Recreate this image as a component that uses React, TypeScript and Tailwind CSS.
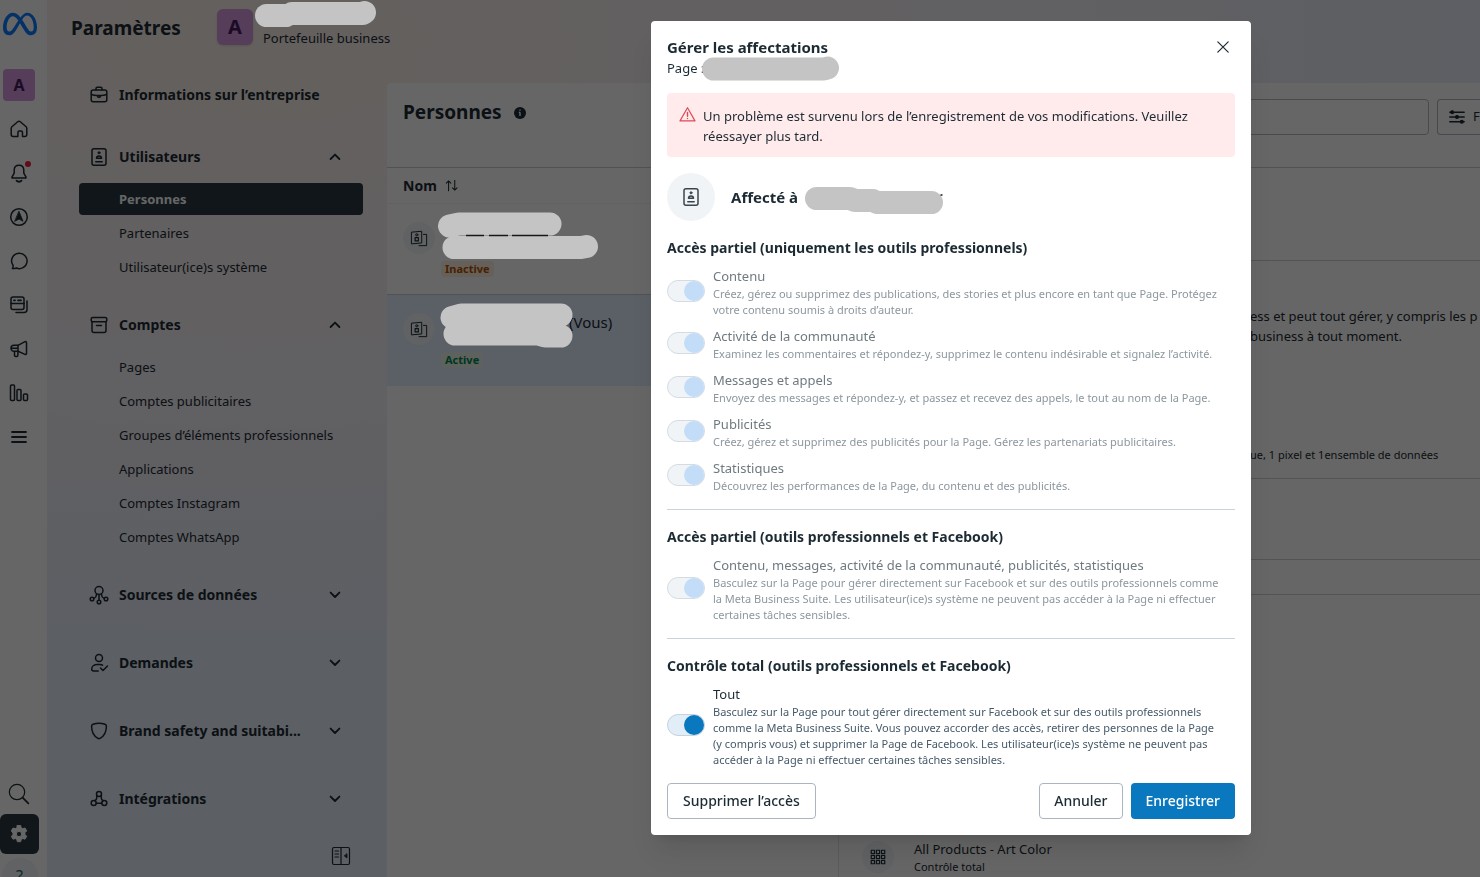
import { useId, type ReactNode } from "react";
import { FaMeta } from "react-icons/fa6";

function Icon({ children, size = 20, className = "" }: { children: ReactNode; size?: number; className?: string }) {
  return (
    <svg
      width={size}
      height={size}
      viewBox="0 0 20 20"
      fill="none"
      stroke="currentColor"
      strokeWidth="1.5"
      strokeLinecap="round"
      strokeLinejoin="round"
      className={"shrink-0 " + className}
      aria-hidden="true"
    >
      {children}
    </svg>
  );
}

const HomeIcon = () => (
  <Icon>
    <path d="M2.2 9.2a2 2 0 0 1 .7-1.5l5.8-4.9a2 2 0 0 1 2.6 0l5.8 4.9a2 2 0 0 1 .7 1.5v6.3a2 2 0 0 1-2 2h-2.3v-4a1.5 1.5 0 0 0-1.5-1.5h-1.6a1.5 1.5 0 0 0-1.500 1.500v4H4.200a2 2 0 0 1-2-2z" />
  </Icon>
);
const BellIcon = () => (
  <Icon>
    <path d="M10 2.2c-3 0-4.8 2.2-4.8 5v3L3 14.2c-.2.5 0 .8.5.8h13c.5 0 .7-.3.5-.8l-2.2-4v-3c0-2.8-1.8-5-4.8-5z" />
    <path d="M7.5 17.6c1.2 1.5 3.8 1.5 5 0" strokeWidth="1.8" />
  </Icon>
);
const CompassIcon = () => (
  <Icon>
    <circle cx="10" cy="10" r="8.3" />
    <path d="M10 4.500l4 9.700-4-2.200-4 2.200z" fill="currentColor" strokeWidth="0.8" />
  </Icon>
);
const ChatIcon = () => (
  <Icon>
    <path d="M10.200 2.200a7.700 7.700 0 1 1-2.800 14.800c-1.300.5-2.700.8-4 .5.700-1 .9-2 .6-3.200A7.700 7.700 0 0 1 10.200 2.200z" />
  </Icon>
);
const PostsIcon = () => (
  <Icon>
    <rect x="2" y="2" width="13" height="12.5" rx="2" />
    <path d="M2 8.500h13M18 6v8.500a3 3 0 0 1-3 3H7" />
    <path d="M5 5.300h1M9 5.300h3" strokeWidth="1.8" />
  </Icon>
);
const MegaphoneIcon = () => (
  <Icon>
    <path d="M9 6.300l7-3.600c.7-.3 1.500.1 1.500.9v11c0 .8-.8 1.200-1.500.8L9 12.300" />
    <path d="M9 6.300H5a3 3 0 0 0 0 6h4zM5.500 12.500v3.800c0 .7.500 1.200 1.200 1.200h1c.7 0 1.200-.5 1.200-1.200v-4M2.200 9.300H9" />
  </Icon>
);
const BarsIcon = () => (
  <Icon>
    <rect x="1.5" y="2" width="4" height="15.5" rx="1" />
    <rect x="8" y="6.5" width="4" height="11" rx="1" />
    <rect x="14.5" y="11" width="4" height="6.5" rx="1" />
  </Icon>
);
const MenuIcon = () => (
  <Icon>
    <path d="M3 5h14M3 10h14M3 15h14" strokeWidth="1.8" />
  </Icon>
);
const SearchIcon = () => (
  <Icon size={22}>
    <circle cx="8.2" cy="8.2" r="7" strokeWidth="1.1" />
    <path d="M13.300 13.300l5.200 5.200" strokeWidth="1.6" />
  </Icon>
);
const GearIcon = () => (
  <Icon className="text-white">
    <path
      fill="currentColor"
      strokeWidth="1"
      fillRule="evenodd"
      d="M8.300 1.500h3.400l.5 2.300 1.600.9 2.200-.7 1.700 2.900-1.700 1.700v2l1.700 1.700-1.700 2.900-2.200-.7-1.600.9-.5 2.300H8.300l-.5-2.300-1.600-.9-2.200.7-1.700-2.900L4 11v-2L2.300 6.900 4 4l2.200.7 1.600-.9zM10 7.300a2.700 2.700 0 1 0 0 5.400 2.700 2.700 0 0 0 0-5.400z"
    />
  </Icon>
);
const BriefcaseIcon = () => (
  <Icon>
    <rect x="2.200" y="5" width="15.600" height="11.800" rx="2" />
    <path d="M7 5V3.500c0-.8.500-1.300 1.300-1.300h3.400c.8 0 1.300.5 1.300 1.300V5M2.500 9.500c2 .8 3.700 1 5.500 1h4c1.800 0 3.500-.2 5.500-1M8.500 10.500v.8c0 .6.500 1 1 1h1c.5 0 1-.4 1-1v-.8" />
  </Icon>
);
const BadgeIcon = () => (
  <Icon>
    <rect x="3" y="1.700" width="14" height="16.600" rx="2" />
    <circle cx="10" cy="5.800" r="1.100" fill="currentColor" strokeWidth="0.8" />
    <path d="M7.500 11.300c0-3 5-3 5 0zM6.800 14.700h6.400" />
  </Icon>
);
const ArchiveIcon = () => (
  <Icon>
    <rect x="2.200" y="2.400" width="15.600" height="4.400" rx="1.500" />
    <path d="M3 6.800v8.700a2 2 0 0 0 2 2h10a2 2 0 0 0 2-2V6.800M7.500 10.500h5" />
  </Icon>
);
const SourcesIcon = () => (
  <Icon>
    <circle cx="10" cy="5.500" r="4" />
    <circle cx="3" cy="14" r="1.800" />
    <circle cx="10" cy="17" r="1.800" />
    <circle cx="17" cy="14" r="1.800" />
    <path d="M10 9.500v5.700M7.500 9l-.3 2c-.2 1.200-1 1.700-2.400 2.400M12.500 9l.3 2c.2 1.200 1 1.700 2.400 2.400" />
  </Icon>
);
const RequestsIcon = () => (
  <Icon>
    <circle cx="10" cy="5" r="3.500" />
    <path d="M13.500 12.200c-.7-.5-1.500-.7-2.500-.7H8.500c-3.500 0-5.800 2-5.800 4.500 0 1.200.8 2 2 2h4.500M11.500 15l2.500 2.500 4.500-4.500" />
  </Icon>
);
const ShieldIcon = () => (
  <Icon>
    <path d="M10 2.300c2.200 0 4.200.4 6 1 .9.300 1.400 1 1.400 1.900 0 5.800-2 9.700-6.300 12.100a2.200 2.200 0 0 1-2.200 0C4.600 14.900 2.600 11 2.600 5.200c0-.9.500-1.600 1.400-1.900 1.800-.6 3.800-1 6-1z" />
  </Icon>
);
const IntegrationsIcon = () => (
  <Icon>
    <circle cx="10" cy="5" r="2.500" />
    <circle cx="4.700" cy="14" r="2.500" />
    <circle cx="15.300" cy="14" r="2.500" />
    <path d="M7.700 6.500v2.500c0 1-.6 1.800-1.700 2.700M12.300 6.500v2.500c0 1 .6 1.800 1.700 2.700M7.200 14.300h5.600" />
  </Icon>
);
const Chevron = ({ up }: { up?: boolean }) => (
  <Icon size={16} className="ml-auto">
    <path d={up ? "M4.500 12.500L10 7l5.500 5.500" : "M4.500 7L10 12.500 15.500 7"} strokeWidth="2.300" />
  </Icon>
);
const CollapseIcon = () => (
  <Icon>
    <rect x="1.500" y="1.500" width="17" height="17" rx="1.500" strokeWidth="1.200" />
    <path d="M10 1.500v17M4 5h3.500M4 8h3.500M4 11h3.500" strokeWidth="1.200" />
    <path d="M16 8v4l-2.500-2z" fill="currentColor" strokeWidth="0.800" />
  </Icon>
);
const CardsIcon = () => (
  <Icon size={18}>
    <path d="M2 3.500l11-1v13l-11 1zM15 6h3.500v12.500H10" strokeWidth="1.100" />
    <circle cx="7.500" cy="6.500" r="1.200" strokeWidth="1.100" />
    <path d="M5.700 9.500h3.600v3.700H5.700z" strokeWidth="1.300" />
  </Icon>
);

/** Grey marker strokes that hide a private name. Each stroke is an SVG path. */
function Redaction({
  strokes,
  width,
  height,
  thickness = 23,
  marks,
  className,
}: {
  strokes: string[];
  width: number;
  height: number;
  thickness?: number;
  marks?: string;
  className: string;
}) {
  return (
    <svg width={width} height={height} className={"absolute z-20 overflow-visible " + className} fill="none" aria-hidden="true">
      {strokes.map((d) => (
        <path key={d} d={d} stroke="#c4c4c4" strokeWidth={thickness} strokeLinecap="round" strokeLinejoin="round" />
      ))}
      {marks && <path d={marks} stroke="#15191b" strokeWidth="1.500" />}
    </svg>
  );
}

const railItems: { label: string; icon: ReactNode; dot?: boolean }[] = [
  { label: "Accueil", icon: <HomeIcon /> },
  { label: "Notifications", icon: <BellIcon />, dot: true },
  { label: "Explorer", icon: <CompassIcon /> },
  { label: "Messages", icon: <ChatIcon /> },
  { label: "Contenu", icon: <PostsIcon /> },
  { label: "Publicités", icon: <MegaphoneIcon /> },
  { label: "Statistiques", icon: <BarsIcon /> },
  { label: "Menu", icon: <MenuIcon /> },
];

function Rail() {
  return (
    <nav className="flex w-[47px] shrink-0 flex-col bg-white" aria-label="Meta">
      <a href="#" aria-label="Meta" className="flex h-[63px] items-start pt-[7px] pl-[3px]">
        <FaMeta size={34} className="text-[#0a7cff]" />
      </a>
      <div className="flex w-[38px] flex-col items-center">
        <button className="my-[6px] size-8 rounded bg-[#d898de] text-base font-bold text-[#481c60]">A</button>
        {railItems.map((item) => (
          <button key={item.label} aria-label={item.label} className="relative grid h-11 place-items-center">
            {item.icon}
            {item.dot && <span className="absolute top-[10px] -right-[2px] size-[6px] rounded-full bg-[#f5203c]" />}
          </button>
        ))}
      </div>
      <div className="mt-auto flex w-[39px] flex-col">
        <button aria-label="Rechercher" className="grid h-10 place-items-center pr-px">
          <SearchIcon />
        </button>
        <button aria-label="Paramètres" className="grid h-10 place-items-center rounded-md bg-[#283943] pr-px">
          <GearIcon />
        </button>
        <div className="mt-1 flex h-[19px] justify-center overflow-hidden">
          <button className="size-9 shrink-0 rounded-full bg-[#f1f4f7] text-base leading-9 text-[#1c6a70]">?</button>
        </div>
      </div>
    </nav>
  );
}

const groups: { label: string; icon: ReactNode; items: string[] }[] = [
  { label: "Utilisateurs", icon: <BadgeIcon />, items: ["Personnes", "Partenaires", "Utilisateur(ice)s système"] },
  {
    label: "Comptes",
    icon: <ArchiveIcon />,
    items: [
      "Pages",
      "Comptes publicitaires",
      "Groupes d’éléments professionnels",
      "Applications",
      "Comptes Instagram",
      "Comptes WhatsApp",
    ],
  },
  { label: "Sources de données", icon: <SourcesIcon />, items: [] },
  { label: "Demandes", icon: <RequestsIcon />, items: [] },
  { label: "Brand safety and suitabi...", icon: <ShieldIcon />, items: [] },
  { label: "Intégrations", icon: <IntegrationsIcon />, items: [] },
];

function Sidebar() {
  return (
    <aside className="flex w-[340px] shrink-0 flex-col">
      <header className="flex h-[77px] shrink-0 items-start pt-2 pl-6 whitespace-nowrap">
        <h1 className="w-32 shrink-0 text-[19px] leading-10 font-bold">Paramètres</h1>
        <span className="mt-2 h-6 w-px bg-[#dcd3d0]" />
        <span className="mt-px ml-[18px] grid size-9 shrink-0 place-items-center rounded-md bg-[#d898de] text-xl font-bold text-[#481c60] shadow">
          A
        </span>
        <div className="relative pt-5 pl-[10px] text-[13px] leading-5">
          Portefeuille business
          <Redaction
            className="-top-2 left-[2px]"
            width={121}
            height={27}
            strokes={["M11.5 15.5L31 15.5", "M37 13.5H108L109.5 12.5"]}
          />
        </div>
      </header>
      <nav className="flex flex-col pr-6 pl-8" aria-label="Paramètres">
        <a href="#" className="mb-[26px] flex h-9 items-center gap-[10px] pl-[10px] text-sm font-bold">
          <BriefcaseIcon />
          Informations sur l’entreprise
        </a>
        {groups.map((group) => {
          const open = group.items.length > 0;
          return (
            <section key={group.label} className={open ? "mb-6" : "mb-8 last:mb-0"}>
              <button
                aria-expanded={open}
                className="flex h-9 w-full items-center gap-[10px] pr-5 pl-[10px] text-left text-sm font-bold"
              >
                {group.icon}
                {group.label}
                <Chevron up={open} />
              </button>
              {open && (
                <ul className="mt-2 flex flex-col gap-[2px]">
                  {group.items.map((item) => (
                    <li key={item}>
                      <a
                        href="#"
                        className={
                          "block rounded pl-10 text-[13px] leading-8 " +
                          (item === "Personnes" ? "bg-[#283943] font-bold text-white" : "")
                        }
                      >
                        {item}
                      </a>
                    </li>
                  ))}
                </ul>
              )}
            </section>
          );
        })}
      </nav>
      <button aria-label="Réduire" className="mt-auto mr-9 mb-[11px] self-end">
        <CollapseIcon />
      </button>
    </aside>
  );
}

function PeopleList() {
  return (
    <table className="w-full border-separate border-spacing-0 text-left">
      <thead>
        <tr>
          <th className="h-9 border-b border-[#f1f2f4] pl-4 text-sm font-bold">
            <span className="flex items-center gap-2">
              Nom
              <Icon size={13}>
                <path d="M5.500 18V3M2 6.500L5.500 3 9 6.500M15 2v15M11.500 13.500L15 17l3.500-3.500" strokeWidth="1.600" />
              </Icon>
            </span>
          </th>
        </tr>
      </thead>
      <tbody>
        <tr>
          <td className="h-[91px] border-b border-[#c8cdd2] p-0 pl-4 align-top">
            <div className="relative flex items-start gap-[6px]">
              <span className="mt-[18px] grid size-8 place-items-center rounded-full bg-[#f1f4f7]">
                <CardsIcon />
              </span>
              <span className="mt-[57px] rounded bg-[#fff0e0] px-1 text-[11px] leading-4 font-bold text-[#b85000]">
                Inactive
              </span>
              <Redaction
                className="top-2 left-[35px]"
                width={161}
                height={48}
                marks="M28 23.5H46M51 23.5H70M74 23.500H110"
                strokes={["M11.5 14L21 12H112", "M16 35.500H143L148.500 34.500"]}
              />
            </div>
          </td>
        </tr>
        <tr>
          <td className="h-[91px] bg-[#e4edff] p-0 pl-4 align-top">
            <div className="relative flex items-start gap-[6px]">
              <span className="mt-[18px] grid size-8 place-items-center rounded-full bg-[#f1f4f7]">
                <CardsIcon />
              </span>
              <span className="flex flex-col items-start">
                <span className="pt-[17px] pl-[128px] text-[15px] leading-5">(Vous)</span>
                <span className="mt-5 rounded bg-[#eaf6ee] px-1 text-[11px] leading-4 font-bold text-[#00884a]">
                  Active
                </span>
              </span>
              <Redaction
                className="top-2 left-[37px]"
                width={134}
                height={45}
                strokes={["M12 14.5L21 12H121", "M15 31H98L105 33H121", "M20 23H112"]}
              />
            </div>
          </td>
        </tr>
      </tbody>
    </table>
  );
}

const gridSteps = [2.5, 8.2, 13.9];

function Details() {
  return (
    <section className="flex min-w-0 flex-1 flex-col overflow-hidden border-l border-[#e4e6e8]">
      <div className="h-[93px] border-b border-[#d0d0d0]" />
      <div className="flex h-[218px] flex-col border-b border-[#d0d0d0] pl-[411px] whitespace-nowrap">
        <p className="mt-[45px] text-[13px] leading-5">
          ess et peut tout gérer, y compris les p<br />
          business à tout moment.
        </p>
        <p className="mt-auto mb-[15px] text-[11px] leading-4">ue, 1 pixel et 1ensemble de données</p>
      </div>
      <div className="h-[81px] border-b border-[#d0d0d0]" />
      <div className="h-[35px] border-b border-[#d0d0d0]" />
      <div className="mt-auto flex items-center pb-[2px] pl-[23px]">
        <span className="grid size-8 place-items-center rounded-full bg-[#f1f4f7]">
          <Icon size={18}>
            <g strokeWidth="1.300">
              {gridSteps.map((y) =>
                gridSteps.map((x) => <rect key={x + "-" + y} x={x} y={y} width="3.600" height="3.600" />),
              )}
            </g>
          </Icon>
        </span>
        <div className="ml-5">
          <p className="text-[13px] leading-5">All Products - Art Color</p>
          <p className="text-[11px] leading-4">Contrôle total</p>
        </div>
      </div>
    </section>
  );
}

function Toggle({ label, text, disabled }: { label: string; text: string; disabled?: boolean }) {
  const id = useId();
  return (
    <div className="flex items-center gap-2">
      <input
        id={id}
        type="checkbox"
        role="switch"
        defaultChecked
        disabled={disabled}
        className="mb-[2px] flex h-[22px] w-[38px] shrink-0 appearance-none items-center justify-end rounded-full border border-[#c5d3de] bg-[#e1edf7] before:size-5 before:rounded-full before:bg-[#0a78be] disabled:border-[#d3dce4] disabled:bg-[#f1f4f7] disabled:before:bg-[#c3dcf7]"
      />
      <div className="pr-3">
        <label htmlFor={id} className={"block text-[13px] leading-5 " + (disabled ? "text-[#6f7a80]" : "text-[#1c2b33]")}>
          {label}
        </label>
        <p className={"text-[11px] leading-4 " + (disabled ? "text-[#8c979e]" : "text-[#465a69]")}>{text}</p>
      </div>
    </div>
  );
}

function AccessSection({ title, divided, children }: { title: string; divided?: boolean; children: ReactNode }) {
  return (
    <section className={divided ? "border-t border-[#cbd2d9] pt-4 pb-[15px]" : "pb-[15px]"}>
      <h3 className="mb-[7px] text-sm leading-[22px] font-bold">{title}</h3>
      <div className="flex flex-col gap-2">{children}</div>
    </section>
  );
}

function AssignmentDialog() {
  return (
    <div
      role="dialog"
      aria-modal="true"
      aria-labelledby="dialog-title"
      className="relative z-20 w-[600px] max-w-full rounded bg-white p-4 text-[#1c2b33] shadow-xl"
    >
      <header className="flex items-start justify-between">
        <div>
          <h2 id="dialog-title" className="text-[15px] leading-[21px] font-bold">
            Gérer les affectations
          </h2>
          <p className="relative text-[13px] leading-5">
            Page :
            <Redaction
              className="-top-[2px] left-[35px]"
              width={137}
              height={25}
              strokes={["M11.5 13H122L125.5 12"]}
            />
          </p>
        </div>
        <button aria-label="Fermer" className="mt-[2px] mr-1">
          <Icon size={16}>
            <path d="M3.500 3.500l13 13M16.500 3.500l-13 13" strokeWidth="1.500" />
          </Icon>
        </button>
      </header>

      <div role="alert" className="mt-[15px] flex gap-[7px] rounded bg-[#ffebec] pt-[13px] pr-8 pb-[11px] pl-3 text-[13px] leading-5">
        <Icon size={17} className="text-[#dd4a57]">
          <path d="M10 2L18.800 17.500H1.200z" strokeWidth="1.400" />
          <path d="M10 7.500v4.500M10 14.600v.2" strokeWidth="1.700" />
        </Icon>
        <p>Un problème est survenu lors de l’enregistrement de vos modifications. Veuillez réessayer plus tard.</p>
      </div>

      <div className="mt-4 mb-4 flex items-center gap-4">
        <span className="grid size-12 place-items-center rounded-full bg-[#f1f4f7] text-[#3a464d]">
          <BadgeIcon />
        </span>
        <p className="relative text-[15px] leading-6 font-bold">
          Affecté à
          <Redaction
            className="top-[2px] left-[74px]"
            width={138}
            height={27}
            marks="M135.500 8h2"
            strokes={["M11.5 11.500H45L50 13.500H68L72 15.500H126.500"]}
          />
        </p>
      </div>

      <AccessSection title="Accès partiel (uniquement les outils professionnels)">
        <Toggle
          disabled
          label="Contenu"
          text="Créez, gérez ou supprimez des publications, des stories et plus encore en tant que Page. Protégez votre contenu soumis à droits d’auteur."
        />
        <Toggle
          disabled
          label="Activité de la communauté"
          text="Examinez les commentaires et répondez-y, supprimez le contenu indésirable et signalez l’activité."
        />
        <Toggle
          disabled
          label="Messages et appels"
          text="Envoyez des messages et répondez-y, et passez et recevez des appels, le tout au nom de la Page."
        />
        <Toggle
          disabled
          label="Publicités"
          text="Créez, gérez et supprimez des publicités pour la Page. Gérez les partenariats publicitaires."
        />
        <Toggle
          disabled
          label="Statistiques"
          text="Découvrez les performances de la Page, du contenu et des publicités."
        />
      </AccessSection>

      <AccessSection divided title="Accès partiel (outils professionnels et Facebook)">
        <Toggle
          disabled
          label="Contenu, messages, activité de la communauté, publicités, statistiques"
          text="Basculez sur la Page pour gérer directement sur Facebook et sur des outils professionnels comme la Meta Business Suite. Les utilisateur(ice)s système ne peuvent pas accéder à la Page ni effectuer certaines tâches sensibles."
        />
      </AccessSection>

      <AccessSection divided title="Contrôle total (outils professionnels et Facebook)">
        <Toggle
          label="Tout"
          text="Basculez sur la Page pour tout gérer directement sur Facebook et sur des outils professionnels comme la Meta Business Suite. Vous pouvez accorder des accès, retirer des personnes de la Page (y compris vous) et supprimer la Page de Facebook. Les utilisateur(ice)s système ne peuvent pas accéder à la Page ni effectuer certaines tâches sensibles."
        />
      </AccessSection>

      <footer className="flex gap-2 text-sm font-medium">
        <button className="mr-auto h-9 rounded border border-[#a9b6c2] px-[15px]">Supprimer l’accès</button>
        <button className="h-9 rounded border border-[#a9b6c2] px-[14px]">Annuler</button>
        <button className="h-9 rounded bg-[#0a78be] px-[15px] text-white">Enregistrer</button>
      </footer>
    </div>
  );
}

export default function App() {
  return (
    <div className="font-['Noto_Sans',sans-serif] text-[#1c2b33]">
      <div className="flex h-screen overflow-hidden">
        <Rail />
        <div className="flex min-w-0 flex-1 bg-[radial-gradient(ellipse_1350px_620px_at_15%_5%,#faf0ea_0%,#f2eff6_60%,#e6eefa_100%)]">
          <Sidebar />
          <main className="mt-[83px] flex min-w-0 flex-1 flex-col rounded-tl bg-white">
            <header className="flex h-[85px] shrink-0 items-start border-b border-[#c8cdd2] pt-4 pl-4">
              <h2 className="text-[19px] leading-[26px] font-bold">Personnes</h2>
              <svg width="12" height="12" viewBox="0 0 12 12" className="mt-2 ml-3" aria-hidden="true">
                <circle cx="6" cy="6" r="6" fill="currentColor" />
                <path d="M6 5.300v3.700M4.800 5.400H6M6 2.600v1.200" stroke="#fff" strokeWidth="1.400" />
              </svg>
              <input
                type="search"
                aria-label="Rechercher"
                className="mr-2 ml-auto h-9 w-[400px] rounded border border-[#b4bcc4]"
              />
              <button className="flex h-9 w-[43px] items-center gap-2 overflow-hidden rounded-l border border-r-0 border-[#a9b6c2] pl-[11px] text-[13px]">
                <Icon size={16}>
                  <path d="M1 4h18M1 10h18M1 16h18" strokeWidth="1.800" />
                  <g fill="currentColor">
                    <circle cx="4" cy="4" r="1.800" />
                    <circle cx="10" cy="10" r="1.800" />
                    <circle cx="16" cy="16" r="1.800" />
                  </g>
                </Icon>
                F
              </button>
            </header>
            <div className="flex min-h-0 flex-1">
              <div className="w-[451px] shrink-0">
                <PeopleList />
              </div>
              <Details />
            </div>
          </main>
        </div>
      </div>
      <div className="fixed inset-0 z-10 bg-black/60" />
      <div className="fixed inset-0 z-20 flex items-start justify-end overflow-auto pt-[21px] pr-[229px]">
        <AssignmentDialog />
      </div>
    </div>
  );
}
